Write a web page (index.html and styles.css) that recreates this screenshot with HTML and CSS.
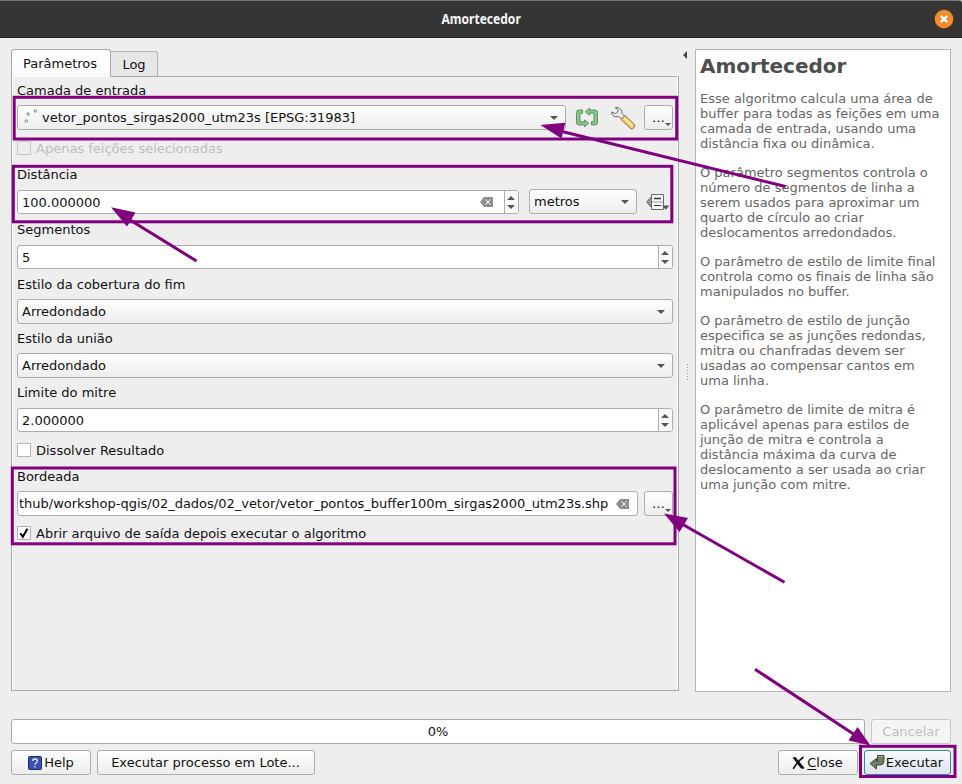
FILE: index.html
```html
<!DOCTYPE html>
<html lang="pt-BR">
<head>
<meta charset="utf-8">
<title>Amortecedor</title>
<link rel="stylesheet" href="styles.css">
</head>
<body>
<div class="window">
  <header class="titlebar">
    <span></span>
    <h1>Amortecedor</h1>
    <svg class="close" width="20" height="20" viewBox="0 0 20 20"><circle cx="10" cy="10" r="9.3" fill="#f68b2c"/><path d="M6.700 6.700l6.600 6.600M13.300 6.700l-6.600 6.600" stroke="#fff" stroke-width="2.200"/></svg>
  </header>

  <main class="content">
    <section class="left">
      <nav class="tabs">
        <div class="tab active">Parâmetros</div>
        <div class="tab">Log</div>
      </nav>
      <div class="pane">
        <div class="label">Camada de entrada</div>
        <div class="row layer-row">
          <div class="combo layer">
            <svg class="points" width="17" height="17" viewBox="0 0 17 17" fill="#fff" stroke="#777" stroke-width=".9"><circle cx="4.300" cy="13" r="1.200"/><circle cx="6.100" cy="6" r="1.200"/><circle cx="13.300" cy="3" r="1.200"/></svg>
            <span>vetor_pontos_sirgas2000_utm23s [EPSG:31983]</span><i class="arrow"></i>
          </div>
          <svg class="tool" width="24" height="25" viewBox="0 0 24 25">
            <g fill="#8cc28c" stroke="#4f9157" stroke-width=".9" stroke-linejoin="round">
              <path d="M7.500 5H4Q1.500 5 1.500 7.500V17.500Q1.500 20 4 20H9.500V21.800L13.800 18.200L9.500 14.800V16.800H5V8.300H7.500Z"/>
              <path d="M16.500 20H20Q22.500 20 22.500 17.500V7.500Q22.500 5 20 5H14.500V3.200L10.200 6.800L14.500 10.200V8.200H19V16.700H16.500Z"/>
            </g>
          </svg>
          <svg class="tool" width="26" height="25" viewBox="0 0 26 25">
            <path d="M11 14.500L15 10.500L24.500 19.500Q25.500 21 24 22.500T21 24Z" fill="#e8cb68" stroke="#8b7a4a"/>
            <path d="M14 13l8.500 8" stroke="#fbe9a0" stroke-width="2"/>
            <path d="M5 2.500Q9 1.500 11.500 5Q12.500 7 12 8.500L14.500 11L11.500 14L8.500 11.500Q4.500 13 2 9.500L1.500 7L5.500 8.500L8 6.500L7.500 4Z" fill="#e9e9e9" stroke="#6c6c6c"/>
          </svg>
          <div class="button dots"><span>…</span><i class="mini"></i></div>
        </div>
        <div class="check disabled"><i class="box"></i><span>Apenas feições selecionadas</span></div>

        <div class="label">Distância</div>
        <div class="row distance-row">
          <div class="spin">
            <span>100.000000</span>
            <svg class="clear" width="14" height="10" viewBox="0 0 14 10"><path d="M4 0H13V10H4L0 5Z" fill="#8e8e8e"/><path d="M5.500 2.500l5 5M10.500 2.500l-5 5" stroke="#fff"/></svg>
            <div class="steps"><i class="up"></i><i class="down"></i></div>
          </div>
          <div class="combo unit"><span>metros</span><i class="arrow"></i></div>
          <svg class="override" width="24" height="18" viewBox="0 0 24 18"><path d="M5.500 3.500V14.500L.700 9Z" fill="#999" stroke="#666"/><path d="M5.500 1.500H17.500V16.500H5.500Z" fill="#f8f8f8" stroke="#6a6a6a"/><path d="M8 5.500H15" stroke="#333" stroke-width="1.500"/><path d="M8 12.500H15" stroke="#444"/><path d="M6 9H17" stroke="#999"/><path d="M16 12.500H23.500L19.800 16.800Z" fill="#555"/></svg>
        </div>

        <div class="label segments">Segmentos</div>
        <div class="spin wide"><span>5</span><div class="steps"><i class="up"></i><i class="down"></i></div></div>
        <div class="label segments">Estilo da cobertura do fim</div>
        <div class="combo"><span>Arredondado</span><i class="arrow"></i></div>
        <div class="label style">Estilo da união</div>
        <div class="combo"><span>Arredondado</span><i class="arrow"></i></div>
        <div class="label style">Limite do mitre</div>
        <div class="spin wide"><span>2.000000</span><div class="steps"><i class="up"></i><i class="down"></i></div></div>
        <div class="check"><i class="box"></i><span>Dissolver Resultado</span></div>

        <div class="label">Bordeada</div>
        <div class="row output-row">
          <div class="path"><span>thub/workshop-qgis/02_dados/02_vetor/vetor_pontos_buffer100m_sirgas2000_utm23s.shp</span>
            <svg class="clear" width="14" height="10" viewBox="0 0 14 10"><path d="M4 0H13V10H4L0 5Z" fill="#8e8e8e"/><path d="M5.500 2.500l5 5M10.500 2.500l-5 5" stroke="#fff"/></svg>
          </div>
          <div class="button dots"><span>…</span><i class="mini"></i></div>
        </div>
        <div class="check open"><i class="box"><svg width="12" height="12" viewBox="0 0 12 12"><path d="M2.300 6.200L4.800 9.800L9.500 1.800" fill="none" stroke="#000" stroke-width="2"/></svg></i><span>Abrir arquivo de saída depois executar o algoritmo</span></div>
      </div>
    </section>

    <div class="splitter"><i class="collapse"></i><i class="grip"></i></div>

    <aside class="help">
      <h2>Amortecedor</h2>
      <p>Esse algoritmo calcula uma área de<br>buffer para todas as feições em uma<br>camada de entrada, usando uma<br>distância fixa ou dinâmica.</p>
      <p>O parâmetro segmentos controla o<br>número de segmentos de linha a<br>serem usados para aproximar um<br>quarto de círculo ao criar<br>deslocamentos arredondados.</p>
      <p>O parâmetro de estilo de limite final<br>controla como os finais de linha são<br>manipulados no buffer.</p>
      <p>O parâmetro de estilo de junção<br>especifica se as junções redondas,<br>mitra ou chanfradas devem ser<br>usadas ao compensar cantos em<br>uma linha.</p>
      <p>O parâmetro de limite de mitra é<br>aplicável apenas para estilos de<br>junção de mitra e controla a<br>distância máxima da curva de<br>deslocamento a ser usada ao criar<br>uma junção com mitre.</p>
    </aside>
  </main>

  <div class="progress-row">
    <div class="progress">0%</div>
    <div class="button cancel">Cancelar</div>
  </div>
  <footer class="actions">
    <div class="button help-btn"><svg width="14" height="14" viewBox="0 0 14 14"><rect x=".5" y=".5" width="13" height="13" rx="1" fill="#3d50b4" stroke="#1c2866"/><path d="M4.700 5Q4.700 2.800 7 2.800T9.300 5Q9.300 6 8 6.900Q7 7.500 7 8.700M7 10V11.500" fill="none" stroke="#fff" stroke-width="1.200"/></svg><span>Help</span></div>
    <div class="button batch">Executar processo em Lote...</div>
    <div class="button close-btn"><svg width="13" height="14" viewBox="0 0 13 14"><path d="M.500 1.500L3.500 1L12.500 12L11 13L8.500 12Z" fill="#111"/><path d="M11.500 1Q6 5 1.200 12.800" fill="none" stroke="#111" stroke-width="1.600"/></svg><span><u>C</u>lose</span></div>
    <div class="button run"><svg width="17" height="17" viewBox="0 0 17 17"><path d="M8.500 1.500H15V7Q15 11 11 11H7.500V15L1 9.500L7.500 4.500V7.500H8.500Z" fill="#6e8160" stroke="#3d4a35" stroke-linejoin="round"/><path d="M9.500 2.500H14" stroke="#a3b196"/></svg><span>Executar</span></div>
  </footer>

  <svg class="annotations" width="962" height="784" viewBox="0 0 962 784">
    <g fill="none" stroke="#800080" stroke-width="3">
      <rect x="14.200" y="97.300" width="662.500" height="41.700"/>
      <rect x="13.300" y="166.300" width="658.500" height="55.500"/>
      <rect x="12.300" y="468" width="662.700" height="75.800"/>
      <rect x="860.500" y="746.300" width="94.500" height="30.200"/>
      <path d="M785.500 186.500L560 131M196.500 261L130 220M784.500 582.300L682 524M755 669.300L855 735"/>
    </g>
    <g fill="#800080">
      <path d="M540.500 125L565.300 122.800L561.500 138.500Z"/>
      <path d="M111 207.300L135.500 212.500L127 226.500Z"/>
      <path d="M664 513.500L688 518L679.500 532Z"/>
      <path d="M870.500 745.500L857.500 727L848.500 740.500Z"/>
    </g>
  </svg>
</div>
</body>
</html>
```
FILE: styles.css
```css
* { box-sizing: border-box; }
body { margin: 0; background: #eee; }
.window {
  position: relative; width: 962px; height: 784px; overflow: hidden;
  background: #eee; color: #111;
  font: 13px/16px "DejaVu Sans", sans-serif;
}
.titlebar {
  display: grid; grid-template-columns: 30px 1fr 30px; align-items: center; justify-items: center;
  height: 38px; background: #353535; border-top: 1px solid #777; border-bottom: 1px solid #202020;
  border-radius: 0 3px 0 0;
}
.titlebar h1 { margin: 0; font: bold 14px/18px "Noto Sans", sans-serif; color: #f5f5f5; transform: scaleX(.86); }
.close { margin-right: 6px; }

.content { display: flex; margin: 11px 11px 0; height: 643px; }
.left { width: 668px; display: flex; flex-direction: column; }
.tabs { display: flex; align-items: flex-end; height: 28px; }
.tab {
  height: 26px; width: 47px; padding-top: 5px; text-align: center; background: #e7e7e7;
  border: 1px solid #b4b4b4; border-left: 0; border-radius: 0 3px 0 0;
}
.tab.active {
  height: 28px; width: 100px; padding: 6px 2px 0 0; border: 1px solid #aaa; border-bottom: 0; border-radius: 3px 3px 0 0;
  background: linear-gradient(#fff, #fbfbfb);
}
.pane {
  flex: 1; margin: -1px 0 1px; padding: 7px 5px 5px; border: 1px solid #aaa; border-top: 0;
  box-shadow: inset 1px 0 #fff, inset -1px 0 #fff; background: linear-gradient(#aaa, #aaa) 98px 0 / 600px 1px no-repeat;
}
.label { height: 15px; margin-top: 11px; white-space: nowrap; }
.label:first-child { margin-top: 0; }
.label.segments { margin-top: 8px; }
.label.style { margin-top: 7px; }
.row { display: flex; margin-top: 7px; height: 25px; }
.combo, .spin, .path, .button {
  display: flex; align-items: center; height: 25px; border: 1px solid #adadad; border-radius: 3px;
  white-space: nowrap;
}
.combo { margin-top: 7px; padding: 0 7px 0 4px; justify-content: space-between; background: linear-gradient(#fefefe, #ededed); }
.row > .combo { margin-top: 0; }
.layer { width: 549px; }
.layer span { flex: 1; }
.points { margin: -2px 3px 0 0; }
.arrow { border: solid transparent; border-width: 4px 4px 0; border-top-color: #555; }
.tool { margin: 0 0 0 9px; }
.tool + .tool { margin-left: 11px; }
.button { justify-content: center; background: linear-gradient(#fefefe, #ededed); }
.dots { position: relative; width: 29px; margin-left: auto; }
.mini { position: absolute; right: 1px; bottom: 3px; border: solid transparent; border-width: 3px 3px 0; border-top-color: #555; }
.check { display: flex; align-items: center; height: 16px; margin-top: 10px; white-space: nowrap; }
.check span { padding-top: 2px; }
.check.open { margin-top: 9px; }
.disabled { color: #bebebe; }
.box { width: 14px; height: 14px; margin-right: 5px; background: #fff; border: 1px solid #b4b4b4; }
.box svg { display: block; }
.disabled .box { background: #eee; border-color: #c8c8c8; }
.spin { height: 24px; padding-left: 4px; background: #fff; }
.spin span { flex: 1; padding-top: 1px; }
.distance-row .spin { width: 502px; margin-top: 1px; }
.spin.wide { margin-top: 8px; }
.clear { margin-right: 10px; flex: none; }
.steps {
  display: flex; flex-direction: column; justify-content: center; align-items: center; gap: 5px;
  width: 14px; height: 22px; padding-right: 1px; border-left: 1px solid #adadad; background: #f8f8f8; border-radius: 0 2px 2px 0;
}
.up, .down { border: solid transparent; }
.up { border-width: 0 4px 4px; border-bottom-color: #555; }
.down { border-width: 4px 4px 0; border-top-color: #555; }
.unit { width: 108px; margin-left: 10px; }
.override { margin: 4px 0 0 9px; }
.path { width: 621px; padding-left: 1px; background: #fff; justify-content: space-between; }
.path span { letter-spacing: -.01px; }
.path .clear { margin-right: 7px; }

.splitter { width: 16px; display: flex; flex-direction: column; align-items: center; }
.collapse { margin: 2px 4px 0 0; border: solid transparent; border-width: 4px 4px 4px 0; border-right-color: #444; }
.grip { width: 1px; height: 17px; margin-top: 305px; background: repeating-linear-gradient(#999 0 1px, transparent 1px 3px); }
.help { width: 256px; padding: 5px 4px; background: #fff; border: 1px solid #b4b4b4; color: #666; line-height: 15px; white-space: nowrap; }
.help h2 { margin: 0 0 14px; font-size: 20px; line-height: 22px; color: #4d4d4d; }
.help p { margin: 0 0 14px; }

.progress-row { display: flex; gap: 6px; margin: 27px 11px 0; }
.progress { width: 854px; height: 25px; border: 1px solid #aaa; border-radius: 3px; background: #fff; text-align: center; line-height: 23px; }
.cancel { width: 80px; color: #bebebe; border-color: #c8c8c8; background: #f5f5f5; }
.actions { display: flex; gap: 6px; margin: 6px 11px 0; }
.help-btn { width: 80px; }
.help-btn svg { margin-right: 2px; }
.batch { width: 218px; padding-right: 1px; }
.close-btn { width: 80px; margin-left: auto; padding-right: 1px; }
.close-btn svg { margin-right: 2px; }
.close-btn u { text-underline-offset: 2px; }
.run { width: 87px; padding-right: 3px; border-color: #3584ac; background: linear-gradient(#f8fbfd, #dde5ec); }
.annotations { position: absolute; inset: 0; }
```
